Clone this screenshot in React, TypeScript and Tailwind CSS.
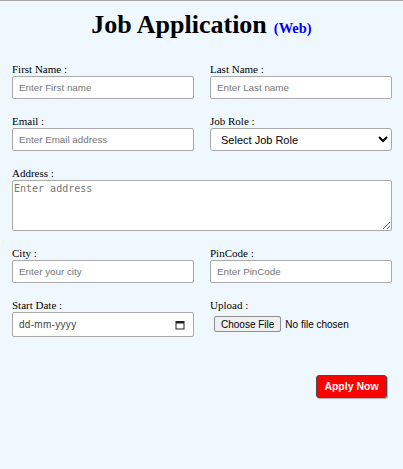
import React from 'react';

const labelCls = "block text-[11px] leading-[14px] text-black font-['Liberation_Serif',serif]";
const inputCls =
  "block w-full h-[23px] px-[6px] bg-white border border-[#a9a9a9] rounded-[2px] text-[9.8px] text-black font-['Liberation_Sans',Arial,sans-serif] placeholder:text-[#757575] outline-none";

const CalendarIcon = () => (
  <svg width="10" height="10" viewBox="0 0 10 10" className="shrink-0">
    <rect x="1" y="1.5" width="8" height="7.5" fill="none" stroke="#222" strokeWidth="1" />
    <rect x="1" y="1.5" width="8" height="2" fill="#222" />
  </svg>
);

const App: React.FC = () => {
  return (
    <div className="min-h-[469px] bg-[#f0f8ff] border-t border-[#a6a6a6]">
      {/* Title */}
      <h1 className="pt-[9px] text-center leading-[30px] font-['Liberation_Serif',serif] font-bold text-black">
        <span className="text-[26px]">Job Application</span>
        <span className="ml-[7px] text-[14.5px] text-[#0000ff]">(Web)</span>
      </h1>

      {/* Form */}
      <form
        className="mt-[19px] pl-[12px] pr-[11px] grid grid-cols-2 gap-x-[16px] gap-y-[15px]"
        onSubmit={(e) => e.preventDefault()}
      >
        <div>
          <label className={labelCls}>First Name :</label>
          <input type="text" placeholder="Enter First name" className={inputCls} />
        </div>
        <div>
          <label className={labelCls}>Last Name :</label>
          <input type="text" placeholder="Enter Last name" className={inputCls} />
        </div>

        <div>
          <label className={labelCls}>Email :</label>
          <input type="email" placeholder="Enter Email address" className={inputCls} />
        </div>
        <div>
          <label className={labelCls}>Job Role :</label>
          <select
            defaultValue=""
            className="block w-full h-[23px] pl-[6px] pr-[4px] bg-white border border-[#a9a9a9] rounded-[3px] text-[11px] text-black font-['Liberation_Sans',Arial,sans-serif] outline-none"
          >
            <option value="">Select Job Role</option>
            <option value="frontend">Frontend Developer</option>
            <option value="backend">Backend Developer</option>
            <option value="fullstack">Full Stack Developer</option>
          </select>
        </div>

        <div className="col-span-2">
          <label className={labelCls}>Address :</label>
          <textarea
            placeholder="Enter address"
            className="block w-full h-[51px] p-[2px] pl-[1px] bg-white border border-[#a9a9a9] rounded-[2px] text-[10px] leading-[12px] text-black font-['DejaVu_Sans_Mono',monospace] placeholder:text-[#757575] outline-none"
          />
        </div>

        <div>
          <label className={labelCls}>City :</label>
          <input type="text" placeholder="Enter your city" className={inputCls} />
        </div>
        <div>
          <label className={labelCls}>PinCode :</label>
          <input type="text" placeholder="Enter PinCode" className={inputCls} />
        </div>

        <div>
          <label className={labelCls}>Start Date :</label>
          <div className="flex items-center w-full h-[25px] pl-[6px] pr-[8px] bg-white border border-[#a9a9a9] rounded-[2px]">
            <input
              type="text"
              placeholder="dd-mm-yyyy"
              className="flex-1 min-w-0 bg-transparent text-[10px] tracking-[0.3px] text-black font-['Liberation_Sans',Arial,sans-serif] placeholder:text-[#444] outline-none"
            />
            <CalendarIcon />
          </div>
        </div>
        <div>
          <label className={labelCls}>Upload :</label>
          <input
            type="file"
            className="block w-full py-[4px] pl-[4px] text-[10px] text-black font-['Liberation_Sans',Arial,sans-serif] file:h-[16px] file:px-[6px] file:bg-[#efefef] file:border file:border-[#8f8f8f] file:rounded-[2px] file:text-[10px] file:text-black"
          />
        </div>
      </form>

      {/* Actions */}
      <div className="mt-[38px] flex justify-end pr-[16px]">
        <button
          type="submit"
          className="w-[71px] h-[23px] bg-[#ff0000] text-white text-[10.5px] font-bold font-['Liberation_Sans',Arial,sans-serif] border border-[#4a4a4a] rounded-[3px] shadow-[1px_1px_1px_rgba(0,0,0,0.3)]"
        >
          Apply Now
        </button>
      </div>
    </div>
  );
};

export default App;
